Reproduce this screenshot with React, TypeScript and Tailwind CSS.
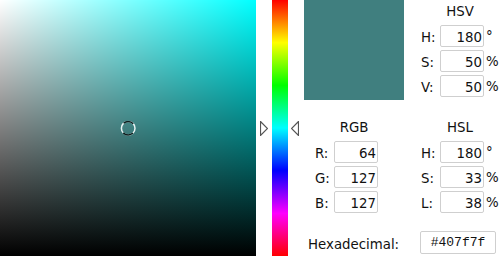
import React from 'react';

type Field = { label: string; value: string; unit?: string };

function NumBox({ value }: { value: string }) {
  return (
    <div className="w-[44px] h-[22px] border border-[#cfcfcf] rounded-[2px] bg-white text-right pr-[1px] leading-[20px] pt-[2px]">
      {value}
    </div>
  );
}

function Group({ title, fields, left }: { title: string; fields: Field[]; left: string }) {
  return (
    <div className={`flex flex-col ${left}`}>
      <div className="ml-[17px] w-[44px] text-center leading-[16px] whitespace-nowrap">{title}</div>
      <div className="flex flex-col gap-[3px] mt-[5px]">
        {fields.map((f) => (
          <div key={f.label} className="flex items-center h-[22px]">
            <div className="w-[19px] pt-[3px]">{f.label}</div>
            <NumBox value={f.value} />
            {f.unit && <div className="ml-[2px] pt-[1px]">{f.unit}</div>}
          </div>
        ))}
      </div>
    </div>
  );
}

function Arrow({ dir }: { dir: 'right' | 'left' }) {
  const pts = dir === 'right' ? '0.5,0.5 7.5,7.5 0.5,14.5' : '7.5,0.5 0.5,7.5 7.5,14.5';
  return (
    <svg width="8" height="15" viewBox="0 0 8 15" className="shrink-0">
      <polygon points={pts} fill="white" stroke="#555" strokeWidth="1.2" />
    </svg>
  );
}

export default function App() {
  const hsv: Field[] = [
    { label: 'H:', value: '180', unit: '°' },
    { label: 'S:', value: '50', unit: '%' },
    { label: 'V:', value: '50', unit: '%' },
  ];
  const rgb: Field[] = [
    { label: 'R:', value: '64' },
    { label: 'G:', value: '127' },
    { label: 'B:', value: '127' },
  ];
  const hsl: Field[] = [
    { label: 'H:', value: '180', unit: '°' },
    { label: 'S:', value: '33', unit: '%' },
    { label: 'L:', value: '38', unit: '%' },
  ];

  return (
    <div className="flex w-[500px] h-[256px] bg-white text-[13.33px] text-[#111] font-['DejaVu_Sans',sans-serif] overflow-hidden">
      {/* saturation / value square */}
      <div className="relative w-64 h-64 shrink-0 bg-[linear-gradient(to_right,#ffffff,#00ffff)]">
        <div className="absolute inset-0 bg-[linear-gradient(to_top,#000000,rgba(0,0,0,0))]" />
        <svg width="16" height="16" viewBox="0 0 16 16" className="absolute left-[120px] top-[120px]">
          <circle cx="8.2" cy="8.2" r="6.8" fill="none" stroke="#e8f4f4" strokeWidth="1.5" />
          <circle cx="8.2" cy="8.2" r="6.8" fill="none" stroke="#0c1f1f" strokeWidth="1.5" strokeDasharray="10.7 10.7" strokeDashoffset="16" />
        </svg>
      </div>

      {/* hue strip */}
      <div className="flex items-center w-12 h-64 shrink-0">
        <div className="ml-[4px]"><Arrow dir="right" /></div>
        <div className="ml-[4px] w-4 h-full bg-[linear-gradient(to_bottom,#ff0000,#ffff00,#00ff00,#00ffff,#0000ff,#ff00ff,#ff0000)]" />
        <div className="ml-[3px]"><Arrow dir="left" /></div>
      </div>

      {/* values */}
      <div className="flex flex-col w-[196px]">
        <div className="flex h-[100px]">
          <div className="w-[100px] h-[100px] bg-[#407f7f]" />
          <div className="pt-[4px]">
            <Group title="HSV" fields={hsv} left="pl-[17px]" />
          </div>
        </div>
        <div className="flex pt-[20px]">
          <div className="w-[100px]">
            <Group title="RGB" fields={rgb} left="pl-[11px]" />
          </div>
          <Group title="HSL" fields={hsl} left="pl-[17px]" />
        </div>
        <div className="flex items-start mt-[18px] pl-[4px]">
          <div className="w-[112px] mt-[6px] leading-[16px]">Hexadecimal:</div>
          <div className="w-[76px] h-[23px] border border-[#cfcfcf] rounded-[2px] text-center leading-[21px] text-[13px] font-['Liberation_Mono',monospace]">
            #407f7f
          </div>
        </div>
      </div>
    </div>
  );
}
